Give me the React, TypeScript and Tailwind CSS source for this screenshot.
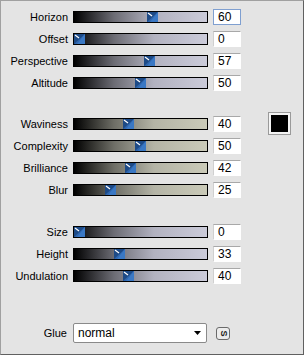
import React from "react";

type Row = { label: string; value: number; focused?: boolean };

const g1: Row[] = [
  { label: "Horizon", value: 60, focused: true },
  { label: "Offset", value: 0 },
  { label: "Perspective", value: 57 },
  { label: "Altitude", value: 50 },
];
const g2: Row[] = [
  { label: "Waviness", value: 40 },
  { label: "Complexity", value: 50 },
  { label: "Brilliance", value: 42 },
  { label: "Blur", value: 25 },
];
const g3: Row[] = [
  { label: "Size", value: 0 },
  { label: "Height", value: 33 },
  { label: "Undulation", value: 40 },
];

function Thumb() {
  return (
    <svg width="11" height="10" viewBox="0 0 11 10" className="block">
      <rect x="0" y="0" width="11" height="10" fill="#2f66ad" />
      <polygon points="0,0 11,0 0,10" fill="#1d4a86" />
      <polygon points="11,0 11,10 3,10" fill="#3a78c4" />
      <line x1="1" y1="1" x2="5" y2="4" stroke="#ffffff" strokeWidth="1.2" />
    </svg>
  );
}

function SliderRow({ row, beige }: { row: Row; beige?: boolean }) {
  const left = Math.round((row.value / 100) * 122);
  return (
    <div className="flex h-[22px] items-center">
      <div className="w-[67px] text-right text-[11px] leading-none text-black">{row.label}</div>
      <div
        className={
          "ml-[5px] h-[12px] w-[135px] border border-black relative " +
          (beige
            ? "bg-[linear-gradient(to_right,#000000_0%,#6e6e66_30%,#b4b4a6_60%,#cacab8_100%)]"
            : "bg-[linear-gradient(to_right,#000000_0%,#6c6c74_30%,#b2b2c0_60%,#cbcbd9_100%)]")
        }
      >
        <div className="absolute top-0" style={{ left }}>
          <Thumb />
        </div>
      </div>
      <div
        className={
          "ml-[5px] h-[16px] w-[28px] bg-white flex items-center pl-[4px] text-[12px] leading-none text-black border " +
          (row.focused ? "border-[#7f9fd0]" : "border-transparent border-t-[#a8a8a8] border-l-[#d0d0d0]")
        }
      >
        {row.value}
      </div>
    </div>
  );
}

export default function App() {
  return (
    <div
      className="w-[304px] h-[355px] bg-[#e4e4e4] border border-[#a0a0a0] border-r-[#606060] border-b-[#606060] relative"
      style={{ fontFamily: '"Liberation Sans", Arial, sans-serif' }}
    >
      <div className="flex flex-col pt-[5px] pl-[0px]">
        <div className="flex flex-col">
          {g1.map((r) => (
            <SliderRow key={r.label} row={r} />
          ))}
        </div>
        <div className="flex mt-[19px]">
          <div className="flex flex-col">
            {g2.map((r) => (
              <SliderRow key={r.label} row={r} beige />
            ))}
          </div>
          <div className="ml-[28px] mt-[0px] w-[21px] h-[21px] bg-black border-2 border-[#f4f4f4] outline outline-1 outline-[#9a9a9a]" />
        </div>
        <div className="flex flex-col mt-[20px]">
          {g3.map((r) => (
            <SliderRow key={r.label} row={r} />
          ))}
        </div>
        <div className="flex items-center mt-[35px] h-[22px]">
          <div className="w-[66px] text-right text-[11px] leading-none text-black">Glue</div>
          <div className="ml-[6px] h-[20px] w-[134px] bg-white border border-[#8a8a8a] rounded-[2px] flex items-center justify-between pl-[4px] pr-[5px]">
            <span className="text-[12px] leading-none text-black">normal</span>
            <svg width="7" height="4" viewBox="0 0 7 4">
              <polygon points="0,0 7,0 3.5,4" fill="#000" />
            </svg>
          </div>
          <div className="ml-[9px] w-[14px] h-[13px] rounded-[3px] border border-[#6a6a6a] bg-[#ececec] flex items-center justify-center">
            <span className="text-[9px] font-bold leading-none text-[#222] rotate-90 inline-block">S</span>
          </div>
        </div>
      </div>
    </div>
  );
}
